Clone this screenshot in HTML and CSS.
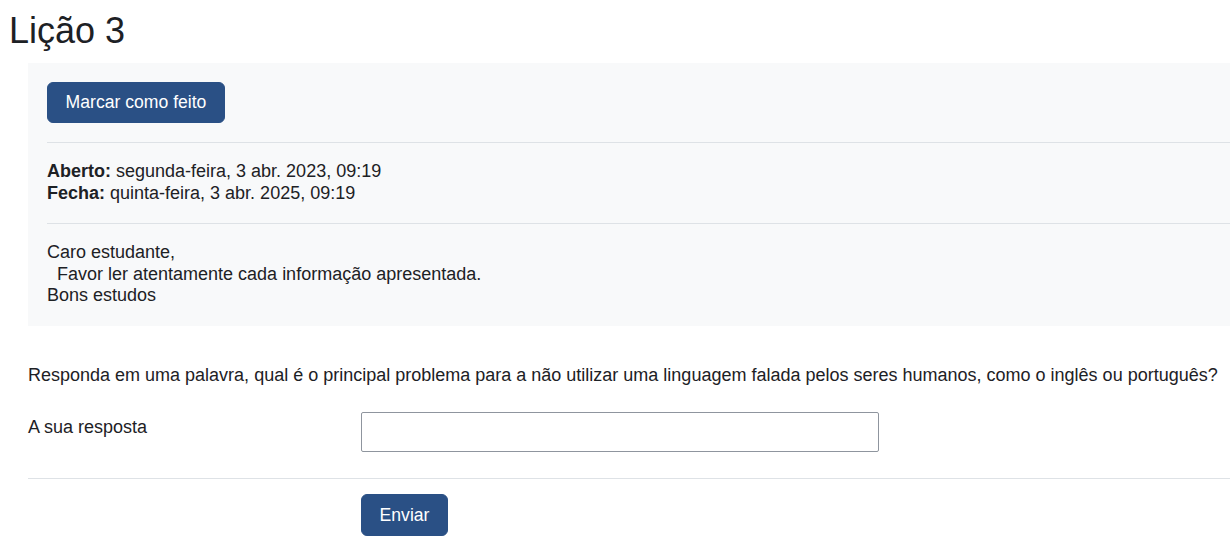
FILE: index.html
```html
<!DOCTYPE html>
<html lang="pt">
<head>
<meta charset="utf-8">
<title>Lição 3</title>
<link rel="stylesheet" href="styles.css">
</head>
<body>
<div class="page">
  <h1 class="title">Lição 3</h1>
  <div class="activity">
    <div class="completion">
      <button class="btn" type="button">Marcar como feito</button>
    </div>
    <div class="dates">
      <div><strong>Aberto:</strong> segunda-feira, 3 abr. 2023, 09:19</div>
      <div><strong>Fecha:</strong> quinta-feira, 3 abr. 2025, 09:19</div>
    </div>
    <div class="intro">
      <div>Caro estudante,</div>
      <div>&nbsp; Favor ler atentamente cada informação apresentada.</div>
      <div>Bons estudos</div>
    </div>
  </div>
  <form class="question">
    <p class="prompt">Responda em uma palavra, qual é o principal problema para a não utilizar uma linguagem falada pelos seres humanos, como o inglês ou português?</p>
    <div class="field">
      <label class="label" for="answer">A sua resposta</label>
      <input class="input" id="answer" type="text">
    </div>
    <div class="actions">
      <button class="btn" type="button">Enviar</button>
    </div>
  </form>
</div>
</body>
</html>
```
FILE: styles.css
```css
html, body {
  margin: 0;
  padding: 0;
  background: #fff;
}
body {
  font-family: "Liberation Sans", Arial, sans-serif;
  font-size: 18px;
  line-height: 21.5px;
  color: #1d2125;
}
.page {
  padding: 0 0 0 28px;
}
.title {
  margin: 0 0 0 -19px;
  padding-top: 9px;
  font-weight: 400;
  font-size: 36px;
  line-height: 44px;
  height: 54px;
  color: #1d2125;
}
.activity {
  background: #f8f9fa;
  padding: 0 0 0 19px;
}
.completion {
  padding: 19px 0 19px;
  border-bottom: 1px solid #dee2e6;
}
.btn {
  font-family: inherit;
  font-size: 17.6px;
  line-height: 21px;
  color: #fff;
  background: #2a5085;
  border: 1px solid #2a5085;
  border-radius: 6px;
  padding: 9px 18px;
  cursor: pointer;
}
.completion .btn {
  width: 178px;
  height: 41px;
  padding: 0;
}
.dates {
  padding: 18px 0 19px;
  border-bottom: 1px solid #dee2e6;
}
.intro {
  padding: 18px 0 19px;
}
.question {
  margin-top: 39px;
  border: 0;
}
.prompt {
  margin: 0 0 26px;
}
.field {
  display: grid;
  grid-template-columns: 333px 518px;
  align-items: start;
  padding-bottom: 26px;
  border-bottom: 1px solid #dee2e6;
}
.label {
  padding-top: 5px;
}
.input {
  box-sizing: border-box;
  height: 40px;
  border: 1px solid #8f959e;
  border-radius: 2px;
  font-family: inherit;
  font-size: 16px;
  padding: 6px 12px;
  background: #fff;
}
.actions {
  padding: 15px 0 0 333px;
}
.actions .btn {
  width: 87px;
  height: 42px;
  padding: 0;
}
```
